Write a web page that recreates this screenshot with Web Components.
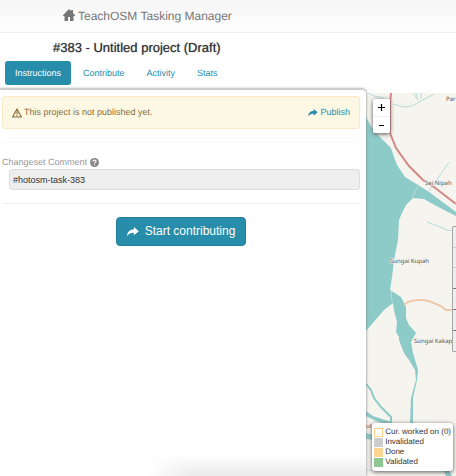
<!DOCTYPE html>
<html lang="en">
<head>
<meta charset="utf-8">
<meta name="viewport" content="width=device-width, initial-scale=1">
<title>TeachOSM Tasking Manager</title>
<style>
html, body { margin: 0; height: 100%; }
body { font-family: "Liberation Sans", Arial, sans-serif; font-size: 9px; line-height: 13px; color: #333; background: #fff; text-rendering: geometricPrecision; }
</style>
</head>
<body>
<task-app></task-app>
<script>
function define(name, html) {
  const template = document.createElement('template');
  template.innerHTML = html;
  customElements.define(name, class extends HTMLElement {
    constructor() {
      super();
      this.attachShadow({ mode: 'open' }).append(template.content.cloneNode(true));
    }
  });
}

const shareArrow = '<svg viewBox="0 0 14 12" aria-hidden="true"><path fill="currentColor" d="M8 0 L14 5 L8 10 V7 C4 7 2 8 0 11 C0 6 3 3 8 3 Z"/></svg>';

define('site-header', `
<style>
:host { display: block; background: linear-gradient(#f5f5f5, #fff); border-bottom: 1px solid #eee; }
a { display: flex; align-items: center; gap: 3px; height: 32px; padding-left: 63px; font-size: 12px; color: #777; text-decoration: none; }
svg { width: 12px; height: 12px; margin-bottom: 3px; }
</style>
<a href="#"><svg viewBox="0 0 12 12" aria-hidden="true"><path fill="#777" d="M6 0 L8 2 V1 H10 V4 L12 6.300 V7 H10.500 V12 H7 V8 H5 V12 H1.500 V7 H0 V6.300 Z"/></svg><span><slot></slot></span></a>`);

define('project-title', `
<style>
:host { display: block; padding: 7px 0 5px 53px; }
h1 { margin: 0; font-size: 13px; line-height: 16px; font-weight: 400; color: #333; text-shadow: 0 0 1px #777; }
</style>
<h1><slot></slot></h1>`);

define('tab-link', `
<style>
:host { display: block; }
a { display: block; padding: 0 10px; line-height: 24px; border-radius: 3px; color: #288dab; text-decoration: none; }
:host([active]) a { background: #288dab; color: #fff; }
</style>
<a href="#"><slot></slot></a>`);

define('tab-bar', `
<style>
:host { display: block; padding: 0 5px 4px; }
nav { display: flex; gap: 2px; }
</style>
<nav><slot></slot></nav>`);

define('draft-alert', `
<style>
:host { display: flex; align-items: center; gap: 2px; padding: 9px; background: #fcf8e3; border: 1px solid #fbe8c8; border-radius: 3px; color: #8a6d3b; }
svg { width: 10px; height: 10px; }
span { flex: 1; }
a { display: flex; align-items: center; gap: 2px; color: #288dab; text-decoration: none; }
a svg { width: 10px; height: 8px; }
</style>
<svg viewBox="0 0 10 10" aria-hidden="true"><path d="M5 1 L9.400 9 H.6 Z" fill="none" stroke="currentColor" stroke-width="1.200" stroke-linejoin="round"/><path d="M5 3.500 V6.300 M5 7 V8.200" stroke="currentColor" stroke-width="1.200"/></svg>
<span><slot></slot></span>
<a href="#">${shareArrow}Publish</a>`);

define('comment-field', `
<style>
:host { display: block; color: #999; }
label { display: flex; align-items: center; gap: 3px; line-height: 13px; }
svg { width: 9px; height: 9px; }
input { display: block; box-sizing: border-box; width: calc(100% - 7px); height: 21px; margin: 0 0 0 7px; padding: 0 3px; border: 1px solid #ddd; border-radius: 3px; background: #eee; color: #333; font: inherit; }
</style>
<label for="comment"><slot></slot><svg viewBox="0 0 9 9" aria-hidden="true"><circle cx="4.500" cy="4.500" r="4.500" fill="#888"/><path d="M3 3.500 C3 1.700 6 1.700 6 3.400 C6 4.500 4.500 4.300 4.500 5.600 M4.500 6.200 V7.300" fill="none" stroke="#fff" stroke-width="1.100"/></svg></label>
<input id="comment" readonly value="#hotosm-task-383">`);

define('start-button', `
<style>
:host { display: flex; justify-content: center; }
button { display: flex; align-items: center; gap: 6px; height: 29px; padding: 0 10px; border: 1px solid #247f9a; border-radius: 4px; background: #288dab; color: #fff; font: inherit; font-size: 12px; }
svg { width: 12px; height: 10px; }
</style>
<button type="button">${shareArrow}<slot></slot></button>`);

define('instructions-panel', `
<style>
:host { display: block; position: relative; box-sizing: border-box; padding: 6px 6px 0 2px; background: #fff; border-top: 1px solid #ccc; border-top-right-radius: 4px; box-shadow: 0 0 3px #777; overflow: hidden; }
hr { margin: 13px 0; border: 0; border-top: 1px solid #eee; }
hr.faint { border-color: #f8f8f8; }
.fade { position: absolute; right: 0; bottom: 0; width: 60%; height: 22px; background: linear-gradient(transparent, #ebebeb); -webkit-mask-image: linear-gradient(90deg, transparent, #000 20%); mask-image: linear-gradient(90deg, transparent, #000 20%); }
</style>
<draft-alert>This project is not published yet.</draft-alert>
<hr class="faint">
<comment-field>Changeset Comment</comment-field>
<hr>
<start-button>Start contributing</start-button>
<div class="fade"></div>`);

define('zoom-control', `
<style>
:host { display: block; width: 17px; border-radius: 2px; background: #fff; box-shadow: 0 1px 4px #555; overflow: hidden; }
button { display: flex; align-items: center; justify-content: center; width: 100%; height: 17px; padding: 0; border: 0; background: #fff; color: #000; }
button + button { border-top: 1px solid #eee; }
svg { width: 7px; height: 7px; }
</style>
<button type="button" aria-label="Zoom in"><svg viewBox="0 0 7 7"><path d="M0 3.500 H7 M3.500 0 V7" stroke="#000" stroke-width="1.200"/></svg></button>
<button type="button" aria-label="Zoom out"><svg viewBox="0 0 7 7"><path d="M1 3.500 H6" stroke="#000" stroke-width="1.200"/></svg></button>`);

define('map-legend', `
<style>
:host { display: block; padding: 4px 2px; border-radius: 3px; background: #fff; box-shadow: 0 1px 4px #555; font-size: 8px; line-height: 10px; color: #333; white-space: nowrap; }
ul { display: grid; margin: 0; padding: 0; list-style: none; }
li { display: flex; align-items: center; gap: 2px; height: 10px; }
i { box-sizing: border-box; width: 9px; height: 9px; }
.working { border: 1px solid #ffd08a; }
.invalid { background: #ccc; }
.done { background: #fdd592; }
.valid { background: #8ec892; }
</style>
<ul>
<li><i class="working"></i>Cur. worked on (0)</li>
<li><i class="invalid"></i>Invalidated</li>
<li><i class="done"></i>Done</li>
<li><i class="valid"></i>Validated</li>
</ul>`);

define('task-map', `
<style>
:host { display: block; position: relative; background: #f5f4ee; overflow: hidden; }
.tiles { display: block; position: absolute; inset: 0; width: 100%; height: 100%; }
text { font: 6px "Noto Sans", sans-serif; fill: #555; stroke: #f5f4ee; stroke-width: 1px; paint-order: stroke; }
zoom-control { position: absolute; left: 7px; top: 6px; }
map-legend { position: absolute; right: 3px; bottom: 5px; }
</style>
<svg class="tiles" viewBox="366 93 90 383" preserveAspectRatio="xMinYMin slice" role="img" aria-label="Map">
<rect x="366" y="93" width="90" height="383" fill="#f5f4ee"/>
<g fill="#8dcbc8">
<path d="M366 117 L373 130 L391 148 L394 157 L397 165 L405 177 L418 185 L429 192 L456 212 V216 L446 211 L431 203 L424 199 L413 198 L406 205 L402 213 L399 220 L398 240 L394 260 L392 277 L390 290 L401 297 L406 307 V318 L409 325 L416 333 L411 342 L413 353 L418 370 L417 380 L413 398 V423 H410 L411 398 L416 380 L415 370 L409 360 L404 353 L399 340 V337 L396 332 L397 322 L394 310 L393 303 L384 310 L366 331 Z"/>
<path d="M366 411 L373 416 L385 420 L392 422 V426 L376 421 L366 416 Z"/>
<path d="M366 433 L374 435 V440 L366 439 Z"/>
<path d="M443 470 L449 470 L452 476 H446 Z"/>
</g>
<g fill="none" stroke="#8dcbc8">
<path stroke-width="2" d="M366 384 L371 390 L374 398 L381 407 L391 417 V424"/>
<path stroke-width="1" stroke="#b9dcd8" d="M368 93 L374 96 L384 98 M393 104 L404 107 L412 106 L421 101 L434 94 M413 93 L418 100 L416 93 M421 93 V99 M418 186 L412 198 M429 191 L449 162 M427 222 L438 226 L447 230 L456 231 M391 291 L392 302"/>
<path stroke-width="1" stroke="#b9dcd8" d="M366 470 L373 470"/>
</g>
<path d="M391 93 L390 104 V133 L396 148 L409 166 L423 180 L434 187 L456 204" fill="none" stroke="#d48986" stroke-width="2"/>
<path d="M404 305 C408 300 420 299 429 301 L441 306 L446 310 H453" fill="none" stroke="#edc7a9" stroke-width="2"/>
<text x="446" y="101">Par</text>
<text x="425" y="185">Sei Nipah</text>
<text x="390" y="263">Sungai Kupah</text>
<text x="414" y="343">Sungai Kakap</text>
<text x="366" y="428">ut</text>
<path d="M457 226.500 H453 Q452.500 226.500 452.500 227 V351 Q452.500 351.500 453 351.500 H457" fill="#eee" stroke="#aaa"/>
<path d="M453 247.500 H456 M453 267.500 H456" stroke="#ccc"/>
<path d="M453 288.500 H456 M453 309.500 H456 M453 330.500 H456" stroke="#777"/>
</svg>
<zoom-control></zoom-control>
<map-legend></map-legend>`);

define('task-app', `
<style>
:host { display: flex; flex-direction: column; min-height: 100vh; }
main { flex: 1; display: grid; grid-template-columns: 61fr 15fr; }
instructions-panel { z-index: 1; }
task-map { margin-top: 4px; }
</style>
<site-header>TeachOSM Tasking Manager</site-header>
<project-title>#383 - Untitled project (Draft)</project-title>
<tab-bar>
<tab-link active>Instructions</tab-link>
<tab-link>Contribute</tab-link>
<tab-link>Activity</tab-link>
<tab-link>Stats</tab-link>
</tab-bar>
<main><instructions-panel></instructions-panel><task-map></task-map></main>`);
</script>
</body>
</html>
